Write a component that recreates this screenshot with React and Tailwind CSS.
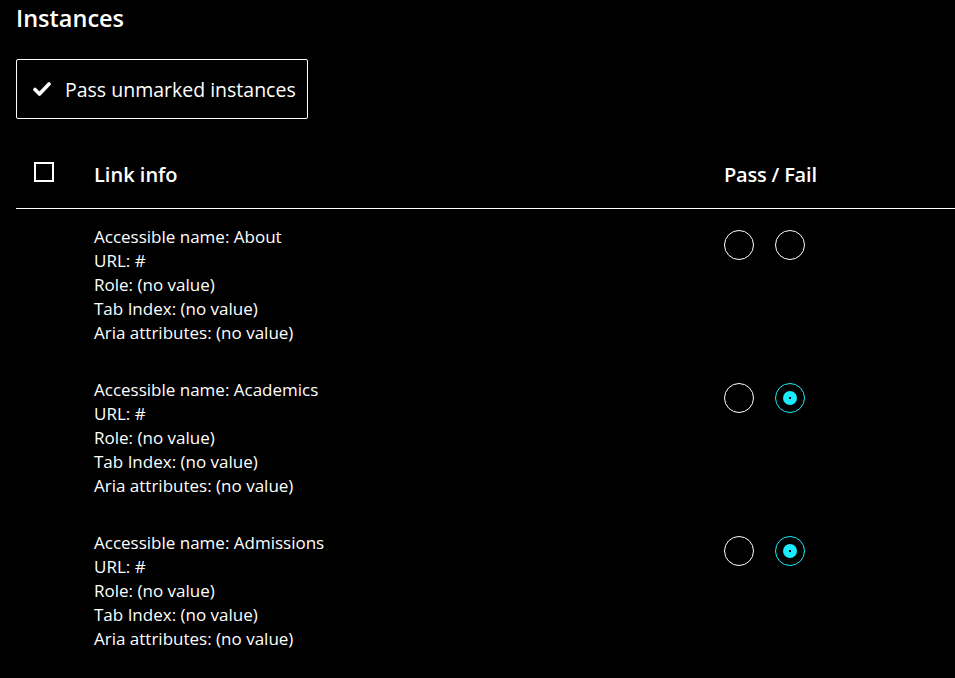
import React from "react";

const rows = [
  { name: "About", fail: false },
  { name: "Academics", fail: true },
  { name: "Admissions", fail: true },
];

function Radio({ checked }) {
  return checked ? (
    <span className="w-[30px] h-[30px] rounded-full border border-[#1aebff] flex items-center justify-center">
      <span className="w-[14px] h-[14px] rounded-full bg-[#1aebff] flex items-center justify-center">
        <span className="w-[2px] h-[2px] bg-black" />
      </span>
    </span>
  ) : (
    <span className="w-[30px] h-[30px] rounded-full border border-white" />
  );
}

export default function App() {
  return (
    <div className="w-[955px] h-[678px] bg-black text-white overflow-hidden font-['Segoe_UI','Open_Sans',sans-serif]">
      <h2 className="pl-4 pt-[3px] text-[23.5px] font-semibold leading-[30px]">Instances</h2>
      <div className="pl-4 pt-[26px]">
        <button className="h-[60px] w-[292px] border border-white rounded-[2px] flex items-center pl-[16px] gap-[14px] text-[19.5px]">
          <svg width="18" height="16" viewBox="0 0 18 16" className="shrink-0">
            <path d="M2 8.5 L6.5 13 L16 3" stroke="white" strokeWidth="3.6" fill="none" strokeLinecap="round" strokeLinejoin="round" />
          </svg>
          <span className="pt-[1px]">Pass unmarked instances</span>
        </button>
      </div>
      <div className="ml-4 mt-[28px] h-[62px] border-b border-white flex items-start pt-[13px]">
        <span className="ml-[18px] mt-[2px] w-[20px] h-[20px] border-2 border-white shrink-0" />
        <span className="ml-[40px] w-[630px] text-[20px] font-semibold leading-[30px]">Link info</span>
        <span className="text-[20px] font-semibold leading-[30px] tracking-[-0.2px]">Pass / Fail</span>
      </div>
      <div className="ml-[94px] pt-[16px] flex flex-col gap-[33px]">
        {rows.map((r) => (
          <div key={r.name} className="flex">
            <div className="w-[630px] text-[17px] leading-[24px]">
              <div>Accessible name: {r.name}</div>
              <div>URL: #</div>
              <div>Role: (no value)</div>
              <div>Tab Index: (no value)</div>
              <div>Aria attributes: (no value)</div>
            </div>
            <div className="flex gap-[21px] pt-[5px]">
              <Radio checked={false} />
              <Radio checked={r.fail} />
            </div>
          </div>
        ))}
      </div>
    </div>
  );
}
